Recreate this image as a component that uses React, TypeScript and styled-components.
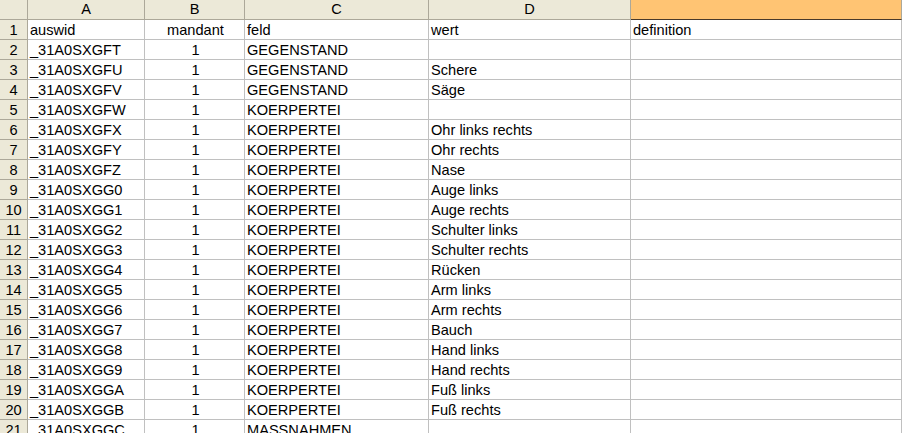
import React from 'react'
import styled, { createGlobalStyle } from 'styled-components'

const Global = createGlobalStyle`
  html, body {
    margin: 0;
    padding: 0;
    background: #ffffff;
    overflow: hidden;
  }
  * { box-sizing: border-box; }
`

const Sheet = styled.div`
  display: grid;
  grid-template-columns: 28px 117px 100px 184px 202px 1fr;
  grid-auto-rows: 20px;
  width: 902px;
  font-family: 'Liberation Sans', Arial, sans-serif;
  font-size: 14.6px;
  color: #000;
`

const Head = styled.div<{ $selected?: boolean }>`
  display: flex;
  align-items: center;
  justify-content: center;
  background: ${p => (p.$selected ? '#ffc473' : '#ece9d8')};
  border-right: 1px solid #aca899;
  border-bottom: 1px solid ${p => (p.$selected ? '#4a3a2a' : '#aca899')};
  line-height: 1;
`

const RowNum = styled(Head)`
  padding-top: 1px;
`

const Cell = styled.div<{ $center?: boolean }>`
  display: flex;
  align-items: center;
  justify-content: ${p => (p.$center ? 'center' : 'flex-start')};
  padding: 1px 0 0 2px;
  border-right: 1px solid #c0c0c0;
  border-bottom: 1px solid #c0c0c0;
  white-space: nowrap;
  overflow: hidden;
  line-height: 1;
`

const rows: [string, string, string, string, string][] = [
  ['auswid', 'mandant', 'feld', 'wert', 'definition'],
  ['_31A0SXGFT', '1', 'GEGENSTAND', '', ''],
  ['_31A0SXGFU', '1', 'GEGENSTAND', 'Schere', ''],
  ['_31A0SXGFV', '1', 'GEGENSTAND', 'Säge', ''],
  ['_31A0SXGFW', '1', 'KOERPERTEI', '', ''],
  ['_31A0SXGFX', '1', 'KOERPERTEI', 'Ohr links rechts', ''],
  ['_31A0SXGFY', '1', 'KOERPERTEI', 'Ohr rechts', ''],
  ['_31A0SXGFZ', '1', 'KOERPERTEI', 'Nase', ''],
  ['_31A0SXGG0', '1', 'KOERPERTEI', 'Auge links', ''],
  ['_31A0SXGG1', '1', 'KOERPERTEI', 'Auge rechts', ''],
  ['_31A0SXGG2', '1', 'KOERPERTEI', 'Schulter links', ''],
  ['_31A0SXGG3', '1', 'KOERPERTEI', 'Schulter rechts', ''],
  ['_31A0SXGG4', '1', 'KOERPERTEI', 'Rücken', ''],
  ['_31A0SXGG5', '1', 'KOERPERTEI', 'Arm links', ''],
  ['_31A0SXGG6', '1', 'KOERPERTEI', 'Arm rechts', ''],
  ['_31A0SXGG7', '1', 'KOERPERTEI', 'Bauch', ''],
  ['_31A0SXGG8', '1', 'KOERPERTEI', 'Hand links', ''],
  ['_31A0SXGG9', '1', 'KOERPERTEI', 'Hand rechts', ''],
  ['_31A0SXGGA', '1', 'KOERPERTEI', 'Fuß links', ''],
  ['_31A0SXGGB', '1', 'KOERPERTEI', 'Fuß rechts', ''],
  ['_31A0SXGGC', '1', 'MASSNAHMEN', '', ''],
]

const App: React.FC = () => {
  return (
    <>
      <Global />
      <Sheet>
        <Head />
        <Head>A</Head>
        <Head>B</Head>
        <Head>C</Head>
        <Head>D</Head>
        <Head $selected />
        {rows.map((r, i) => (
          <React.Fragment key={i}>
            <RowNum>{i + 1}</RowNum>
            <Cell>{r[0]}</Cell>
            <Cell $center>{r[1]}</Cell>
            <Cell>{r[2]}</Cell>
            <Cell>{r[3]}</Cell>
            <Cell>{r[4]}</Cell>
          </React.Fragment>
        ))}
      </Sheet>
    </>
  )
}

export default App
